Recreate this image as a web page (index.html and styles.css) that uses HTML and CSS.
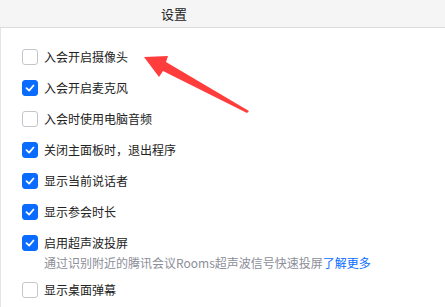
FILE: index.html
```html
<!DOCTYPE html>
<html lang="zh">
<head>
<meta charset="utf-8">
<link rel="stylesheet" href="styles.css">
</head>
<body>
<div class="header"><div class="title">设置</div></div>
<div class="content">
  <div class="item"><span class="box"></span><span class="label">入会开启摄像头</span></div>
  <div class="item"><span class="box checked"><svg viewBox="0 0 16 16"><path d="M4 8.2 L7 11 L12 5.2" fill="none" stroke="#fff" stroke-width="2" stroke-linecap="round" stroke-linejoin="round"/></svg></span><span class="label">入会开启麦克风</span></div>
  <div class="item"><span class="box"></span><span class="label">入会时使用电脑音频</span></div>
  <div class="item"><span class="box checked"><svg viewBox="0 0 16 16"><path d="M4 8.2 L7 11 L12 5.2" fill="none" stroke="#fff" stroke-width="2" stroke-linecap="round" stroke-linejoin="round"/></svg></span><span class="label">关闭主面板时，退出程序</span></div>
  <div class="item"><span class="box checked"><svg viewBox="0 0 16 16"><path d="M4 8.2 L7 11 L12 5.2" fill="none" stroke="#fff" stroke-width="2" stroke-linecap="round" stroke-linejoin="round"/></svg></span><span class="label">显示当前说话者</span></div>
  <div class="item"><span class="box checked"><svg viewBox="0 0 16 16"><path d="M4 8.2 L7 11 L12 5.2" fill="none" stroke="#fff" stroke-width="2" stroke-linecap="round" stroke-linejoin="round"/></svg></span><span class="label">显示参会时长</span></div>
  <div class="group">
    <div class="item"><span class="box checked"><svg viewBox="0 0 16 16"><path d="M4 8.2 L7 11 L12 5.2" fill="none" stroke="#fff" stroke-width="2" stroke-linecap="round" stroke-linejoin="round"/></svg></span><span class="label">启用超声波投屏</span></div>
    <div class="desc">通过识别附近的腾讯会议Rooms超声波信号快速投屏<span class="link">了解更多</span></div>
  </div>
  <div class="item"><span class="box"></span><span class="label">显示桌面弹幕</span></div>
</div>
<svg class="arrow" viewBox="0 0 445 307" width="445" height="307">
  <polygon points="144,57 168,56 166,62 249,111 247,113 163,71 159,77" fill="#ff3d3d"/>
</svg>
</body>
</html>
```
FILE: styles.css
```css
html, body {
  margin: 0;
  padding: 0;
  background: #ffffff;
  font-family: "Noto Sans CJK SC", "Noto Sans", sans-serif;
  width: 445px;
  height: 307px;
  overflow: hidden;
  position: relative;
}
.header {
  height: 27px;
  background: #f5f5f5;
  border-bottom: 1px solid #dcdcdc;
  box-sizing: border-box;
  height: 28px;
}
.title {
  width: 348px;
  text-align: center;
  font-size: 13px;
  line-height: 27px;
  color: #222;
}
.content {
  border-left: 1px solid #e4e4e4;
  height: 279px;
  box-sizing: border-box;
  padding: 19px 0 0 21px;
  display: flex;
  flex-direction: column;
  gap: 11px;
}
.item {
  display: flex;
  align-items: center;
  height: 20px;
}
.box {
  width: 16px;
  height: 16px;
  box-sizing: border-box;
  border: 1px solid #c5c6cc;
  border-radius: 3px;
  background: #fff;
  display: flex;
  align-items: center;
  justify-content: center;
  flex: none;
}
.box.checked {
  background: #0a6cff;
  border-color: #0a6cff;
}
.box svg {
  width: 16px;
  height: 16px;
  display: block;
}
.label {
  margin-left: 6px;
  font-size: 12px;
  color: #222;
  line-height: 20px;
}
.group {
  display: flex;
  flex-direction: column;
  margin-bottom: -2px;
}
.desc {
  margin-left: 22px;
  margin-top: 2px;
  font-size: 12px;
  line-height: 16px;
  color: #8c8e99;
  white-space: nowrap;
}
.link {
  color: #0a6cff;
}
.arrow {
  position: absolute;
  left: 0;
  top: 0;
  pointer-events: none;
}
```
